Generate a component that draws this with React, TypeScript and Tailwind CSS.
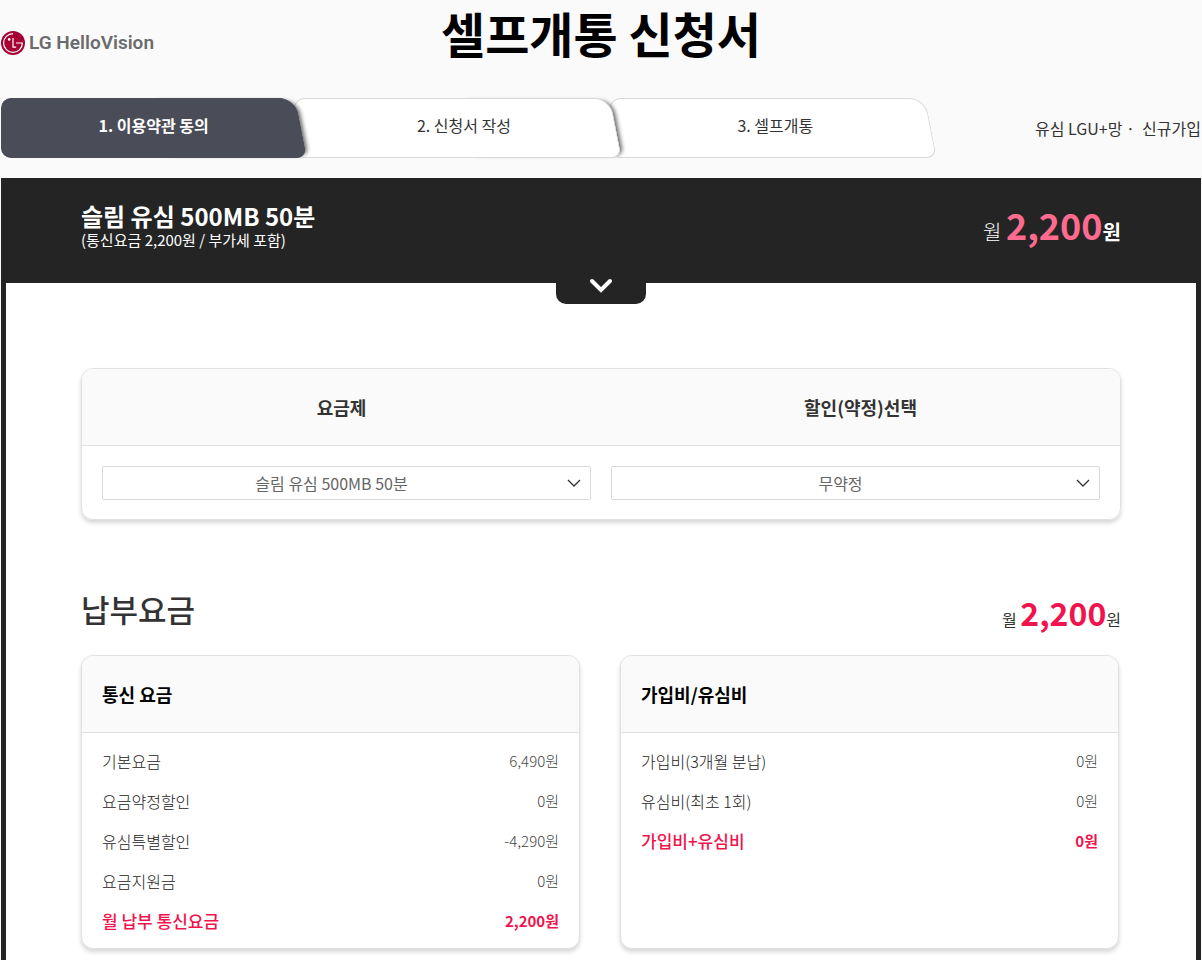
import { useState } from "react";



type FeeRow = {
    label: string;
    value: string;
    total?: boolean;
};

const usageFees: FeeRow[] = [
    { label: "기본요금", value: "6,490원" },
    { label: "요금약정할인", value: "0원" },
    { label: "유심특별할인", value: "-4,290원" },
    { label: "요금지원금", value: "0원" },
    { label: "월 납부 통신요금", value: "2,200원", total: true }
];

const joinFees: FeeRow[] = [
    { label: "가입비(3개월 분납)", value: "0원" },
    { label: "유심비(최초 1회)", value: "0원" },
    { label: "가입비+유심비", value: "0원", total: true }
];


function Logo() {
    return (
        <a href="#" aria-label="LG HelloVision" className="flex items-center gap-1">
            <svg viewBox="0 0 24 24" className="size-6" aria-hidden="true">
                <circle cx="12" cy="12" r="12" fill="#a50034" />
                <path
                    d="M12 2.6A9.4 9.4 0 1 0 21.4 12H15"
                    fill="none"
                    stroke="#fff"
                    strokeWidth="1.2"
                />
                <path d="M12 7V16.2H15.2" fill="none" stroke="#fff" strokeWidth="1.2" />
                <circle cx="8.2" cy="8.4" r="1.3" fill="#fff" />
            </svg>
            <span className="font-[Roboto] text-[19px] leading-6 font-semibold text-[#6b6b6b]">
                LG HelloVision
            </span>
        </a>
    );
}


function Steps() {
    // Each tab is two overlapping parts: a straight left side and a slanted right side.
    const tab = "relative h-15 text-center leading-[54px] before:absolute before:inset-y-0 before:right-1/3 before:-z-10 before:rounded-l-[10px] before:border before:border-r-0 after:absolute after:inset-y-0 after:right-1.5 after:left-1/2 after:-z-10 after:skew-x-[11deg] after:rounded-tr-[16px] after:rounded-br-[10px] after:border after:border-l-0";
    const plain = "before:border-[#d9d9d9] before:bg-white after:border-[#d9d9d9] after:bg-white";
    const shadow = "after:shadow-[5px_0_4px_-3px_rgba(0,0,0,0.6)]";

    return (
        <ol className="flex w-[78%]">
            <li
                aria-current="step"
                className={`${tab} ${shadow} z-30 flex-[306] font-bold text-white before:left-0 before:border-[#4a4c57] before:bg-[#4a4c57] after:border-[#4a4c57] after:bg-[#4a4c57]`}
            >
                1. 이용약관 동의
            </li>
            <li className={`${tab} ${plain} ${shadow} z-20 flex-[316] before:-left-3`}>
                2. 신청서 작성
            </li>
            <li className={`${tab} ${plain} z-10 flex-[308] pr-2 before:-left-3`}>
                3. 셀프개통
            </li>
        </ol>
    );
}


function SelectBox({ id, options }: { id: string; options: string[] }) {
    const [value, setValue] = useState<string>(options[0]);

    return (
        <div className="relative flex-1">
            <select
                id={id}
                value={value}
                onChange={(e) => setValue(e.target.value)}
                className="h-[34px] w-full appearance-none rounded-xs border border-[#d9d9d9] bg-white pr-[30px] text-base text-[#666] [text-align-last:center]"
            >
                {options.map((option) => (
                    <option key={option}>{option}</option>
                ))}
            </select>
            <svg
                viewBox="0 0 14 8"
                className="pointer-events-none absolute top-[13px] right-2.5 h-2 w-3.5"
                aria-hidden="true"
            >
                <path d="M1 1l6 6 6-6" fill="none" stroke="#333" strokeWidth="1.3" />
            </svg>
        </div>
    );
}


function FeeCard({ title, rows }: { title: string; rows: FeeRow[] }) {
    return (
        <section className="overflow-hidden rounded-xl border border-[#e1e1e1] bg-white shadow-[0_3px_4px_rgba(0,0,0,0.16)]">
            <h3 className="border-b border-[#e1e1e1] bg-[#fafafa] px-5 text-lg leading-[76px] font-bold text-black">
                {title}
            </h3>
            <div className="px-5 pt-2 pb-[7px]">
                <table className="w-full">
                    <tbody>
                        {rows.map((row) => (
                            <tr key={row.label}>
                                <th
                                    scope="row"
                                    className={`h-10 p-0 text-left leading-6 ${row.total ? "text-[17px] font-medium text-[#f0134d]" : "text-base font-light text-[#222]"}`}
                                >
                                    {row.label}
                                </th>
                                <td
                                    className={`p-0 text-right text-[15px] leading-6 ${row.total ? "font-bold text-[#f0134d]" : "font-light text-[#444]"}`}
                                >
                                    {row.value}
                                </td>
                            </tr>
                        ))}
                    </tbody>
                </table>
            </div>
        </section>
    );
}


export default function App() {
    const [open, setOpen] = useState<boolean>(true);

    return (
        <div className="min-h-screen bg-[#fafafa] px-px font-['Noto_Sans_CJK_KR',sans-serif] text-base text-[#333]">
            <header className="grid grid-cols-[1fr_auto_1fr]">
                <div className="pt-[31px]">
                    <Logo />
                </div>
                <h1 className="pb-0.5 text-5xl leading-16 font-bold text-black">셀프개통 신청서</h1>
            </header>

            <div className="mt-8 flex items-center justify-between">
                <Steps />
                <p className="whitespace-nowrap">유심 LGU+망 · &nbsp;신규가입</p>
            </div>

            <main className="mt-5 border-x-[5px] border-[#242424] bg-white">
                <div className="relative flex h-[105px] justify-between bg-[#242424] px-[75px] text-white">
                    <div className="pt-6">
                        <h2 className="text-2xl leading-7 font-bold">슬림 유심 500MB 50분</h2>
                        <p className="text-[15px] leading-5">(통신요금 2,200원 / 부가세 포함)</p>
                    </div>
                    <p className="flex items-baseline pt-[22px] text-xl leading-12 font-light">
                        월&nbsp;
                        <strong className="text-4xl leading-12 font-bold text-[#ff6b8f]">2,200</strong>
                        <span className="font-bold">원</span>
                    </p>
                    <button
                        type="button"
                        aria-label="요금 상세"
                        aria-expanded={open}
                        onClick={() => setOpen(!open)}
                        className="absolute top-full left-1/2 flex h-[21px] w-[90px] -translate-x-1/2 items-start justify-center rounded-b-[10px] bg-[#242424]"
                    >
                        <svg viewBox="0 0 24 16" className="-mt-[5px] h-4 w-6" aria-hidden="true">
                            <path
                                d="M3 3l9 9 9-9"
                                fill="none"
                                stroke="#fff"
                                strokeWidth="4"
                                strokeLinecap="round"
                            />
                        </svg>
                    </button>
                </div>

                {open && (
                    <div className="px-[75px] pt-[85px] pb-10">
                        <section className="overflow-hidden rounded-xl border border-[#e1e1e1] shadow-[0_3px_4px_rgba(0,0,0,0.16)]">
                            <div className="flex border-b border-[#e1e1e1] bg-[#fafafa] text-center text-lg leading-[76px] font-bold">
                                <label htmlFor="plan" className="flex-1">요금제</label>
                                <label htmlFor="contract" className="flex-1">할인(약정)선택</label>
                            </div>
                            <div className="flex gap-5 px-5 pt-5 pb-[19px]">
                                <SelectBox id="plan" options={["슬림 유심 500MB 50분"]} />
                                <SelectBox id="contract" options={["무약정"]} />
                            </div>
                        </section>

                        <div className="mt-[62px] flex h-[54px] items-start justify-between">
                            <h2 className="text-[31px] leading-[54px] font-medium">납부요금</h2>
                            <p className="flex items-baseline text-base leading-[60px]">
                                월&nbsp;
                                <strong className="text-[32px] leading-[60px] font-bold text-[#f0134d]">2,200</strong>
                                원
                            </p>
                        </div>

                        <div className="mt-[19px] grid grid-cols-2 gap-10 pr-0.5">
                            <FeeCard title="통신 요금" rows={usageFees} />
                            <FeeCard title="가입비/유심비" rows={joinFees} />
                        </div>
                    </div>
                )}
            </main>
        </div>
    );
}
